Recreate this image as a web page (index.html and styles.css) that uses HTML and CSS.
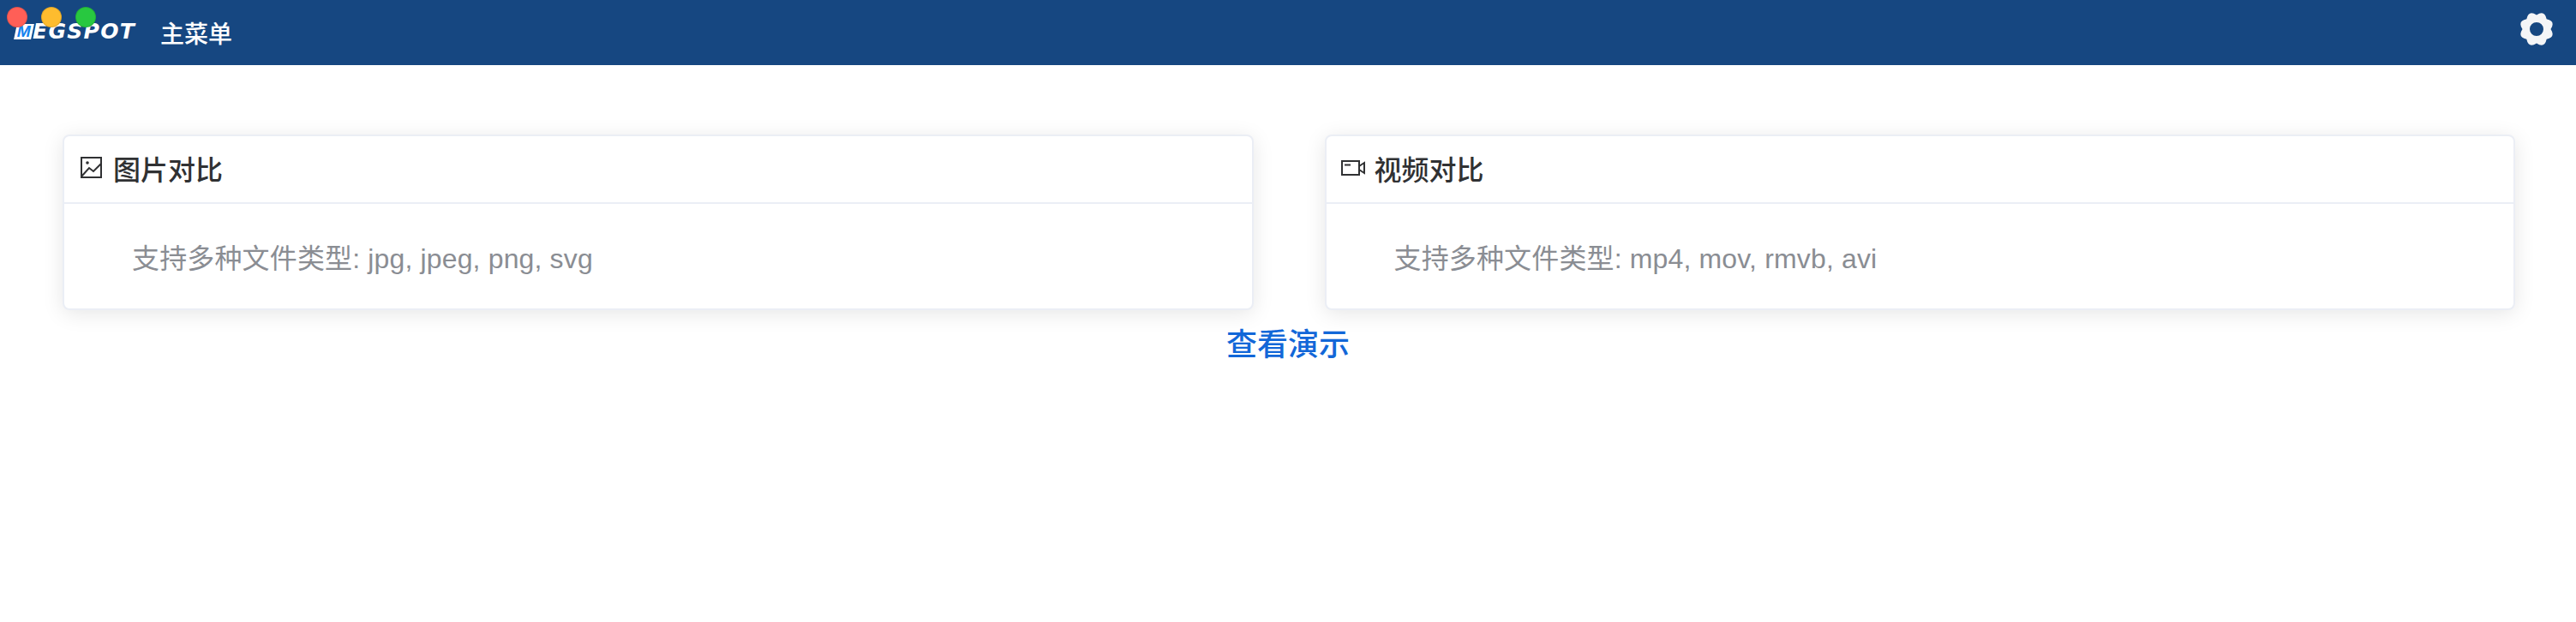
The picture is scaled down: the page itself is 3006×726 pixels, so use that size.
FILE: index.html
```html
<!DOCTYPE html>
<html lang="zh">
<head>
    <meta charset="UTF-8">
    <title>MegSpot</title>
    <link rel="stylesheet" href="styles.css">
</head>
<body>

<div class="window-dots">
    <span class="dot dot-close"></span>
    <span class="dot dot-min"></span>
    <span class="dot dot-max"></span>
</div>

<header class="topbar">
    <div class="logo"><span class="logo-m"><span class="logo-m-text">M</span></span><span class="logo-rest">EGSPOT</span></div>
    <div class="menu-title">主菜单</div>
    <svg class="gear" viewBox="0 0 40 40">
        <path fill-rule="evenodd" fill="#f4f5f7" d="M20 3.500Q29.380 -2.630 31.670 8.330Q42.630 10.620 36.500 20Q42.630 29.380 31.670 31.670Q29.380 42.630 20 36.500Q10.620 42.630 8.330 31.670Q-2.630 29.380 3.500 20Q-2.630 10.620 8.330 8.330Q10.620 -2.630 20 3.500zM20 12a8 8 0 1 0 0 16 8 8 0 0 0 0-16z"/>
    </svg>
</header>

<div class="cards">
    <div class="card">
        <div class="card-head">
            <svg class="card-icon card-icon-image" viewBox="0 0 25 25">
                <rect x="1" y="1" width="23" height="23" fill="none" stroke="#303133" stroke-width="2"/>
                <circle cx="8" cy="7" r="1.800" fill="#303133"/>
                <path d="M1.500 22.500L10 13l5 4 9-9" fill="none" stroke="#303133" stroke-width="2"/>
            </svg>
            <span>图片对比</span>
        </div>
        <div class="card-body">支持多种文件类型: jpg, jpeg, png, svg</div>
    </div>
    <div class="card">
        <div class="card-head">
            <svg class="card-icon card-icon-video" viewBox="0 0 28 18">
                <rect x="1" y="1" width="20" height="16" fill="none" stroke="#303133" stroke-width="2"/>
                <path d="M4 5.500h7" stroke="#303133" stroke-width="2"/>
                <path d="M21 7l6-4v12l-6-4" fill="none" stroke="#303133" stroke-width="2"/>
            </svg>
            <span>视频对比</span>
        </div>
        <div class="card-body">支持多种文件类型: mp4, mov, rmvb, avi</div>
    </div>
</div>

<div class="demo"><a class="demo-link" href="#">查看演示</a></div>

</body>
</html>
```

FILE: styles.css
```css
body {
    font-family: "Liberation Sans", "Noto Sans CJK SC", sans-serif;
    background-color: #fff;
    margin: 0;
    position: relative;
}
.window-dots {
    position: absolute;
    top: 8px;
    left: 8px;
    display: flex;
    gap: 16px;
    z-index: 2;
}
.dot {
    width: 24px;
    height: 24px;
    border-radius: 50%;
    box-sizing: border-box;
    border: 1px solid rgba(0, 0, 0, 0.12);
}
.dot-close {
    background-color: #ff5f57;
}
.dot-min {
    background-color: #febc2e;
}
.dot-max {
    background-color: #28c840;
}
.topbar {
    height: 76px;
    background-color: #164781;
    display: flex;
    align-items: center;
    padding: 0 26px 0 18px;
}
.logo {
    width: 142px;
    display: flex;
    align-items: center;
    height: 20px;
    margin-top: -3px;
    color: #fff;
    white-space: nowrap;
}
.logo-m {
    display: block;
    width: 20px;
    height: 18px;
    background-color: #fff;
    transform: skewX(-12deg);
    text-align: center;
}
.logo-m-text {
    display: block;
    font-size: 19px;
    line-height: 18px;
    font-weight: bold;
    color: #1583ee;
}
.logo-rest {
    font-family: "DejaVu Sans", sans-serif;
    font-size: 25px;
    font-weight: bold;
    font-style: italic;
    letter-spacing: 1.300px;
    line-height: 20px;
}
.menu-title {
    margin-left: 27px;
    color: #fff;
    font-size: 28px;
    font-weight: 500;
}
.gear {
    width: 40px;
    height: 40px;
    margin-left: auto;
    margin-top: -8px;
}
.cards {
    display: grid;
    grid-template-columns: 1fr 1fr;
    gap: 83px;
    padding: 81px 71px 0 73px;
}
.card {
    background-color: #fff;
    border: 2px solid #ebeef5;
    border-radius: 8px;
    box-shadow: 0 4px 24px rgba(0, 0, 0, 0.1);
}
.card-head {
    display: flex;
    align-items: center;
    height: 73px;
    padding: 0 17px 4px;
    border-bottom: 2px solid #ebeef5;
    color: #303133;
    font-size: 32px;
    font-weight: 500;
}
.card-icon-image {
    width: 25px;
    height: 25px;
    margin: 0 13px 0 2px;
}
.card-icon-video {
    width: 28px;
    height: 18px;
    margin-right: 11px;
}
.card-body {
    padding: 39px 0 33px 79px;
    color: #8a8d93;
    font-size: 32px;
    line-height: 50px;
    letter-spacing: 0.150px;
}
.demo {
    text-align: center;
    margin-top: 20px;
}
.demo-link {
    display: inline-block;
    color: #1267d8;
    font-size: 36px;
    line-height: 42px;
    font-weight: 500;
    text-decoration: none;
}
```
